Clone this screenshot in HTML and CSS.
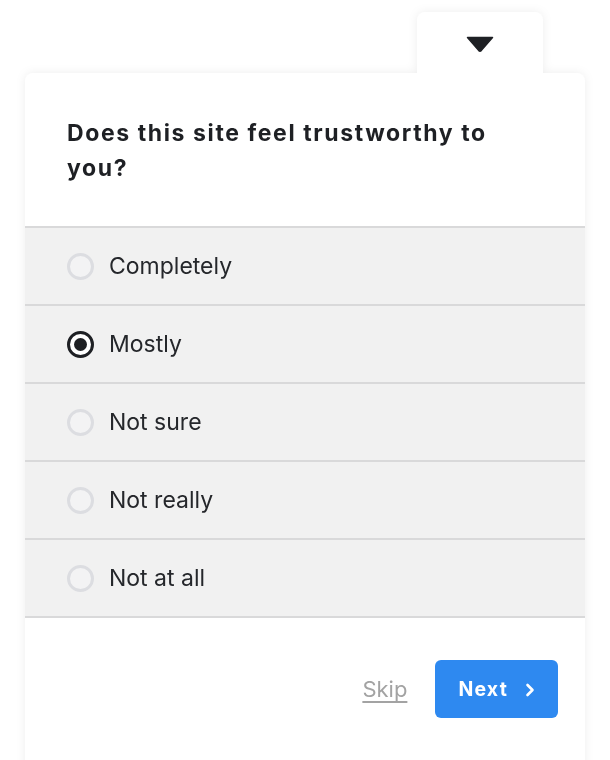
FILE: index.html
```html
<!DOCTYPE html>
<html lang="en">
<head>
<meta charset="utf-8">
<title>Survey</title>
<link rel="stylesheet" href="styles.css">
</head>
<body>
<div class="widget">
  <div class="tab-row">
    <button class="tab" type="button" aria-label="Collapse">
      <svg class="caret" width="28" height="16" viewBox="0 0 28 16"><path d="M1.5 1.5 H26.5 L15.2 14.6 Q14 15.8 12.8 14.6 Z" fill="#1e2024" stroke="#1e2024" stroke-width="1.5" stroke-linejoin="round"/></svg>
    </button>
  </div>
  <div class="card">
    <div class="header">
      <h1 class="question">Does this site feel trustworthy to you?</h1>
    </div>
    <ul class="options">
      <li class="option"><span class="radio"></span><span class="label">Completely</span></li>
      <li class="option"><span class="radio checked"></span><span class="label">Mostly</span></li>
      <li class="option"><span class="radio"></span><span class="label">Not sure</span></li>
      <li class="option"><span class="radio"></span><span class="label">Not really</span></li>
      <li class="option"><span class="radio"></span><span class="label">Not at all</span></li>
    </ul>
    <div class="footer">
      <a class="skip" href="#">Skip</a>
      <button class="next" type="button">Next
        <svg class="chev" width="10" height="14" viewBox="0 0 10 14"><path d="M2.5 2 L7.5 7 L2.5 12" fill="none" stroke="#fff" stroke-width="2.6" stroke-linecap="round" stroke-linejoin="round"/></svg>
      </button>
    </div>
  </div>
</div>
</body>
</html>
```
FILE: styles.css
```css
html, body {
  margin: 0;
  padding: 0;
  background: #ffffff;
  overflow: hidden;
}
body {
  font-family: Inter, "Liberation Sans", sans-serif;
  color: #1e2024;
  height: 760px;
}
.widget {
  padding: 12px 25px 0 25px;
  filter: drop-shadow(0 0 5px rgba(0, 0, 0, 0.07));
}
.tab-row {
  display: flex;
  justify-content: flex-end;
  padding-right: 42px;
}
.tab {
  width: 126px;
  height: 62px;
  margin-bottom: -1px;
  background: #ffffff;
  border: none;
  border-radius: 8px 8px 0 0;
  display: flex;
  justify-content: center;
  align-items: flex-start;
  padding: 24px 0 0 0;
}
.caret {
  display: block;
}
.card {
  background: #ffffff;
  border-radius: 8px 8px 0 0;
  min-height: 720px;
}
.header {
  padding: 43px 42px 40px 42px;
}
.question {
  margin: 0;
  font-size: 23px;
  font-weight: 700;
  line-height: 35px;
  letter-spacing: 1.6px;
}
.options {
  list-style: none;
  margin: 0;
  padding: 0;
  background: #f1f1f1;
  border-bottom: 2px solid #d9d9da;
}
.option {
  display: flex;
  align-items: center;
  gap: 15px;
  height: 76px;
  padding-left: 42px;
  border-top: 2px solid #d9d9da;
}
.radio {
  box-sizing: border-box;
  width: 27px;
  height: 27px;
  border-radius: 50%;
  border: 3px solid #dcdde1;
  background: #f3f3f4;
  display: flex;
  align-items: center;
  justify-content: center;
  flex-shrink: 0;
}
.radio.checked {
  border: 3.5px solid #1e2024;
  background: #ffffff;
}
.radio.checked::after {
  content: "";
  width: 13px;
  height: 13px;
  border-radius: 50%;
  background: #1e2024;
}
.label {
  font-size: 23px;
  line-height: 28px;
  color: #25272b;
}
.footer {
  display: flex;
  justify-content: flex-end;
  align-items: center;
  gap: 28px;
  padding: 42px 27px 0 0;
}
.skip {
  font-size: 22px;
  color: #a3a3a3;
  text-decoration: underline;
  text-underline-offset: 4px;
  text-decoration-thickness: 1.5px;
}
.next {
  display: flex;
  align-items: center;
  gap: 17px;
  height: 58px;
  padding: 0 23px 0 23px;
  border: none;
  border-radius: 6px;
  background: #2e89f0;
  color: #ffffff;
  font-family: Inter, "Liberation Sans", sans-serif;
  font-size: 19.5px;
  font-weight: 700;
  letter-spacing: 1.2px;
}
.chev {
  display: block;
  margin-top: 2px;
}
```
